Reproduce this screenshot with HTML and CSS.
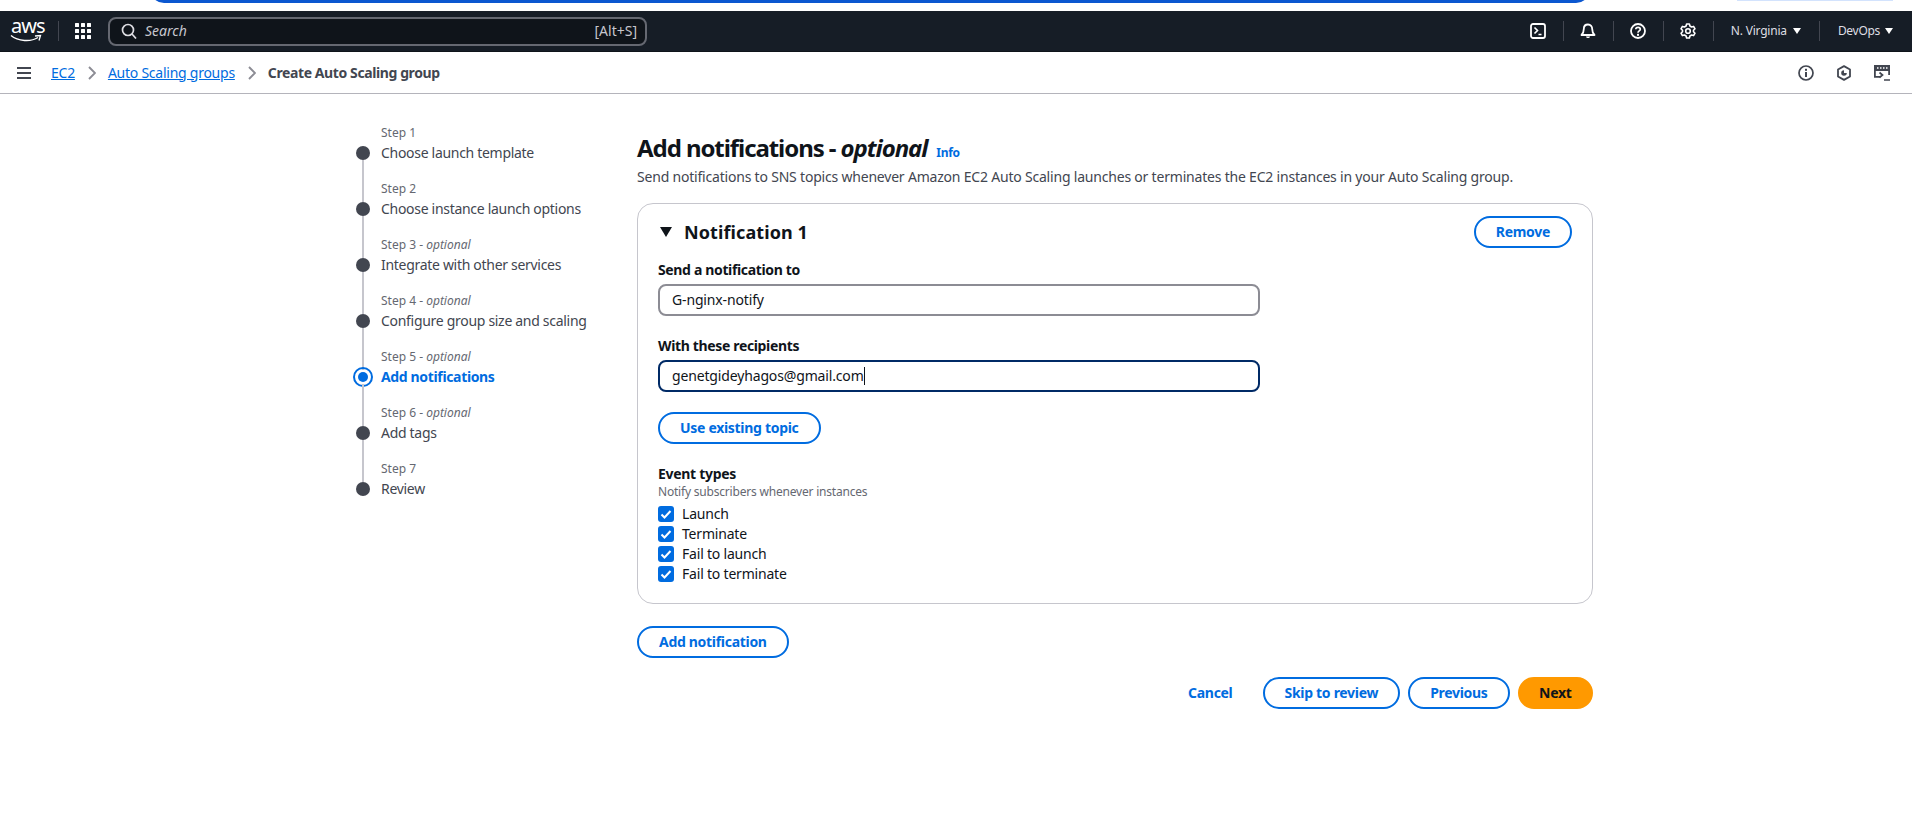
FILE: index.html
```html
<!DOCTYPE html>
<html lang="en">
<head>
    <meta charset="UTF-8">
    <title>Create Auto Scaling group</title>
    <link rel="stylesheet" href="styles.css">
</head>
<body>
    <div class="browser-strip">
        <div class="strip-box"></div>
        <div class="strip-tint"></div>
    </div>

    <header class="topnav">
        <div class="aws-logo">
            <span class="aws-word">aws</span>
            <svg class="aws-smile" viewBox="0 0 32 10" width="32" height="10"><path d="M1 1.500C8 7.500 21 8 28 3.500" fill="none" stroke="#fff" stroke-width="1.400"/><path d="M25 2 30.500 1.500 29 6.500" fill="none" stroke="#fff" stroke-width="1.300"/></svg>
        </div>
        <span class="nav-sep nav-sep-logo"></span>
        <svg class="grid-icon" viewBox="0 0 16 16" width="16" height="16"><g fill="#fff"><rect width="4" height="4" rx=".5"/><rect x="6" width="4" height="4" rx=".5"/><rect x="12" width="4" height="4" rx=".5"/><rect y="6" width="4" height="4" rx=".5"/><rect x="6" y="6" width="4" height="4" rx=".5"/><rect x="12" y="6" width="4" height="4" rx=".5"/><rect y="12" width="4" height="4" rx=".5"/><rect x="6" y="12" width="4" height="4" rx=".5"/><rect x="12" y="12" width="4" height="4" rx=".5"/></g></svg>
        <div class="search">
            <svg viewBox="0 0 16 16" width="16" height="16"><circle cx="7" cy="7" r="5.500" fill="none" stroke="#dedee3" stroke-width="1.700"/><path d="m11 11 4 4.500" stroke="#dedee3" stroke-width="1.700"/></svg>
            <span class="search-text">Search</span>
            <span class="search-key">[Alt+S]</span>
        </div>
        <div class="nav-right">
            <div class="nav-icon"><svg viewBox="0 0 16 16" width="16" height="16"><rect x="1" y="1" width="14" height="14" rx="2" fill="none" stroke="#fff" stroke-width="1.800"/><path d="m4.500 4.500 3 3-3 3M8.500 11.500h3" fill="none" stroke="#fff" stroke-width="1.600"/></svg></div>
            <span class="nav-sep"></span>
            <div class="nav-icon"><svg viewBox="0 0 16 16" width="16" height="16"><path d="M8 1.500c-2.700 0-4.200 2-4.200 4.500 0 3-.8 4.500-2.300 6h13c-1.500-1.500-2.300-3-2.300-6 0-2.500-1.500-4.500-4.200-4.500Z" fill="none" stroke="#fff" stroke-width="1.800" stroke-linejoin="round"/><path d="M6 13.500c.3 2 3.700 2 4 0Z" fill="#fff"/></svg></div>
            <span class="nav-sep"></span>
            <div class="nav-icon"><svg viewBox="0 0 16 16" width="16" height="16"><circle cx="8" cy="8" r="7" fill="none" stroke="#fff" stroke-width="1.800"/><path d="M5.800 6.200C5.800 3.600 10.300 3.700 10.300 6.200 10.300 7.900 8 7.800 8 9.700" fill="none" stroke="#fff" stroke-width="1.700"/><rect x="7" y="10.800" width="2" height="2" fill="#fff"/></svg></div>
            <span class="nav-sep"></span>
            <div class="nav-icon"><svg viewBox="0 0 16 16" width="16" height="16"><path d="M6.600 1h2.800l.5 2 1.700 1 2-.6 1.400 2.400L13.500 7.300v1.400l1.500 1.500-1.400 2.400-2-.6-1.700 1-.5 2H6.600l-.5-2-1.700-1-2 .6L1 10.200l1.500-1.500V7.300L1 5.800l1.400-2.400 2 .6 1.700-1Z" fill="none" stroke="#fff" stroke-width="1.600" stroke-linejoin="round"/><circle cx="8" cy="8" r="2.300" fill="none" stroke="#fff" stroke-width="1.600"/></svg></div>
            <span class="nav-sep"></span>
            <div class="nav-menu nav-region">N. Virginia <span class="caret-white"></span></div>
            <span class="nav-sep"></span>
            <div class="nav-menu nav-account">DevOps <span class="caret-white"></span></div>
        </div>
    </header>

    <div class="subnav">
        <svg class="burger" viewBox="0 0 14 12" width="14" height="12"><path d="M0 1h14M0 6h14M0 11h14" stroke="#424650" stroke-width="2"/></svg>
        <a class="crumb" href="#">EC2</a>
        <svg class="chevron" viewBox="0 0 8 14" width="8" height="14"><path d="m1 1 6 6-6 6" fill="none" stroke="#8c8c94" stroke-width="1.900"/></svg>
        <a class="crumb" href="#">Auto Scaling groups</a>
        <svg class="chevron" viewBox="0 0 8 14" width="8" height="14"><path d="m1 1 6 6-6 6" fill="none" stroke="#8c8c94" stroke-width="1.900"/></svg>
        <span class="crumb-current">Create Auto Scaling group</span>
        <div class="subnav-tools">
            <svg viewBox="0 0 16 16" width="16" height="16"><circle cx="8" cy="8" r="7" fill="none" stroke="#424650" stroke-width="1.700"/><path d="M8 7v5" stroke="#424650" stroke-width="2"/><rect x="7" y="3.800" width="2" height="2" fill="#424650"/></svg>
            <svg viewBox="0 0 16 16" width="16" height="16"><path d="M8 1.100 14 4.500v7L8 14.900 2 11.500v-7Z" fill="none" stroke="#424650" stroke-width="1.800" stroke-linejoin="round"/><path d="M8 5.200a2.800 2.800 0 1 0 2.800 2.800H8Z" fill="#424650"/></svg>
            <svg viewBox="0 0 16 16" width="16" height="16"><path d="M0 0h16v10h-1.800V6H1.800v5H6v1.800H0Z" fill="#424650"/><path d="M3 3h1.500M6 3h1.500M9 3h1.500M12 3h1.500" stroke="#fff" stroke-width="1.500"/><path d="m5.500 7.500 3 2.500-3 2.500M10 15h6" fill="none" stroke="#424650" stroke-width="1.700"/></svg>
        </div>
    </div>

    <main class="wizard">
        <ol class="steps">
            <li class="step step-first">
                <div class="marker"><span class="line"></span><span class="dot"></span></div>
                <div class="step-text"><small>Step 1</small><span>Choose launch template</span></div>
            </li>
            <li class="step">
                <div class="marker"><span class="line"></span><span class="dot"></span></div>
                <div class="step-text"><small>Step 2</small><span>Choose instance launch options</span></div>
            </li>
            <li class="step">
                <div class="marker"><span class="line"></span><span class="dot"></span></div>
                <div class="step-text"><small>Step 3 - <i>optional</i></small><span>Integrate with other services</span></div>
            </li>
            <li class="step">
                <div class="marker"><span class="line"></span><span class="dot"></span></div>
                <div class="step-text"><small>Step 4 - <i>optional</i></small><span>Configure group size and scaling</span></div>
            </li>
            <li class="step step-active">
                <div class="marker"><span class="line"></span><span class="dot"></span></div>
                <div class="step-text"><small>Step 5 - <i>optional</i></small><span>Add notifications</span></div>
            </li>
            <li class="step">
                <div class="marker"><span class="line"></span><span class="dot"></span></div>
                <div class="step-text"><small>Step 6 - <i>optional</i></small><span>Add tags</span></div>
            </li>
            <li class="step">
                <div class="marker"><span class="line"></span><span class="dot"></span></div>
                <div class="step-text"><small>Step 7</small><span>Review</span></div>
            </li>
        </ol>

        <section class="content">
            <div class="page-title">
                <h1>Add notifications - <i>optional</i></h1>
                <a class="info-link" href="#">Info</a>
            </div>
            <p class="page-desc">Send notifications to SNS topics whenever Amazon EC2 Auto Scaling launches or terminates the EC2 instances in your Auto Scaling group.</p>

            <div class="card">
                <div class="card-head">
                    <h2><span class="caret-dark"></span>Notification 1</h2>
                    <button class="btn">Remove</button>
                </div>

                <label class="field-label">Send a notification to</label>
                <div class="input">G-nginx-notify</div>

                <label class="field-label field-gap">With these recipients</label>
                <div class="input input-focus">genetgideyhagos@gmail.com<span class="text-caret"></span></div>

                <button class="btn btn-topic">Use existing topic</button>

                <div class="event-title">Event types</div>
                <div class="event-desc">Notify subscribers whenever instances</div>
                <div class="checks">
                    <div class="check"><svg viewBox="0 0 16 16" width="16" height="16"><rect width="16" height="16" rx="3" fill="#006ce0"/><path d="m3.500 8.500 3 3 6-6.500" fill="none" stroke="#fff" stroke-width="2"/></svg>Launch</div>
                    <div class="check"><svg viewBox="0 0 16 16" width="16" height="16"><rect width="16" height="16" rx="3" fill="#006ce0"/><path d="m3.500 8.500 3 3 6-6.500" fill="none" stroke="#fff" stroke-width="2"/></svg>Terminate</div>
                    <div class="check"><svg viewBox="0 0 16 16" width="16" height="16"><rect width="16" height="16" rx="3" fill="#006ce0"/><path d="m3.500 8.500 3 3 6-6.500" fill="none" stroke="#fff" stroke-width="2"/></svg>Fail to launch</div>
                    <div class="check"><svg viewBox="0 0 16 16" width="16" height="16"><rect width="16" height="16" rx="3" fill="#006ce0"/><path d="m3.500 8.500 3 3 6-6.500" fill="none" stroke="#fff" stroke-width="2"/></svg>Fail to terminate</div>
                </div>
            </div>

            <button class="btn btn-add">Add notification</button>

            <div class="actions">
                <button class="btn btn-link">Cancel</button>
                <button class="btn">Skip to review</button>
                <button class="btn">Previous</button>
                <button class="btn btn-primary">Next</button>
            </div>
        </section>
    </main>
</body>
</html>
```

FILE: styles.css
```css
* {
    box-sizing: border-box;
}

body {
    margin: 0;
    background: #fff;
    color: #0f141a;
    font-family: "Noto Sans", "Open Sans", Arial, sans-serif;
    font-size: 14px;
    line-height: 20px;
    letter-spacing: -.2px;
}

/* strip of the browser page above the console */
.browser-strip {
    display: flex;
    height: 11px;
    overflow: hidden;
}

.strip-box {
    width: 1440px;
    height: 30px;
    margin: -27px 0 0 150px;
    border: 3px solid #0b57d0;
    border-radius: 14px;
}

.strip-tint {
    width: 156px;
    height: 1px;
    margin-left: 147px;
    background: #d3e3fd;
}

/* top navigation */
.topnav {
    display: flex;
    align-items: center;
    height: 41px;
    padding-left: 10px;
    background: #161d26;
    border-bottom: 1px solid #0f141a;
}

.aws-logo {
    position: relative;
    width: 32px;
    height: 28px;
    color: #fff;
}

.aws-word {
    display: block;
    padding-left: 1px;
    font-size: 20px;
    line-height: 18px;
    letter-spacing: -1px;
}

.aws-smile {
    position: absolute;
    left: 0;
    top: 17px;
}

.nav-sep {
    width: 1px;
    height: 20px;
    background: #424650;
}

.nav-sep-logo {
    margin: 0 16px;
}

.search {
    display: flex;
    align-items: center;
    width: 539px;
    height: 29px;
    margin-left: 17px;
    padding: 0 8px 0 11px;
    background: #0f141a;
    border: 2px solid #656871;
    border-radius: 8px;
    color: #c6c6cd;
    letter-spacing: 0;
}

.search-text {
    margin-left: 8px;
    font-style: italic;
}

.search-key {
    margin-left: auto;
}

.nav-right {
    display: flex;
    align-items: center;
    margin-left: auto;
    padding-right: 19px;
}

.nav-icon {
    display: flex;
    justify-content: center;
    width: 49px;
}

.nav-menu {
    display: flex;
    align-items: center;
    gap: 6px;
    color: #dedee3;
    font-size: 12px;
}

.nav-region {
    padding: 0 18px 0 17px;
}

.nav-account {
    gap: 5px;
    padding-left: 18px;
    letter-spacing: -.3px;
}

.caret-white {
    width: 0;
    height: 0;
    border-left: 4px solid transparent;
    border-right: 4px solid transparent;
    border-top: 6px solid #fff;
}

/* breadcrumb bar */
.subnav {
    display: flex;
    align-items: center;
    height: 42px;
    padding: 0 22px 0 17px;
    border-bottom: 1px solid #b4b4bb;
}

.burger {
    margin-right: 20px;
}

.crumb {
    color: #006ce0;
    text-decoration: underline;
    letter-spacing: -.25px;
}

.chevron {
    margin: 0 12px 0 13px;
}

.crumb-current {
    color: #424650;
    font-weight: 700;
    letter-spacing: -.4px;
}

.subnav-tools {
    display: flex;
    gap: 22px;
    margin-left: auto;
}

/* wizard layout */
.wizard {
    display: flex;
    padding-left: 353px;
}

.steps {
    width: 284px;
    margin: 0;
    padding: 10px 0 0;
    list-style: none;
}

.step {
    display: flex;
    gap: 8px;
    height: 56px;
}

.marker {
    display: flex;
    flex-direction: column;
    align-items: center;
    width: 20px;
}

.line {
    flex: 1;
    width: 2px;
    background: #c6c6cd;
}

.step-first .line {
    visibility: hidden;
}

.dot {
    flex: none;
    width: 14px;
    height: 14px;
    border-radius: 50%;
    background: #424650;
}

.step-text {
    display: flex;
    flex-direction: column;
    justify-content: flex-end;
    margin-bottom: -3px;
    color: #424650;
    letter-spacing: -.3px;
}

.step-text small {
    color: #656871;
    font-size: 12px;
    line-height: 20px;
    letter-spacing: 0;
}

.step-active .dot {
    width: 20px;
    height: 20px;
    margin: -3px;
    padding: 3px;
    border: 2px solid #006ce0;
    background: #006ce0;
    background-clip: content-box;
}

.step-active .step-text span {
    color: #006ce0;
    font-weight: 700;
    letter-spacing: -.35px;
}

/* main column */
.content {
    width: 956px;
    padding-top: 39px;
}

.page-title {
    display: flex;
    align-items: baseline;
    gap: 9px;
}

h1 {
    margin: 0;
    font-size: 24px;
    line-height: 30px;
    font-weight: 700;
    letter-spacing: -1.07px;
}

.info-link {
    color: #006ce0;
    font-size: 12px;
    font-weight: 700;
    text-decoration: none;
    letter-spacing: -.3px;
}

.page-desc {
    margin: 4px 0 16px;
    color: #424650;
}

.card {
    display: flex;
    flex-direction: column;
    align-items: flex-start;
    height: 401px;
    padding: 12px 20px 0;
    border: 1px solid #c6c6cd;
    border-radius: 16px;
}

.card-head {
    display: flex;
    justify-content: space-between;
    align-items: center;
    align-self: stretch;
    margin-bottom: 12px;
}

h2 {
    display: flex;
    align-items: center;
    margin: 0;
    font-size: 18px;
    line-height: 22px;
    font-weight: 700;
    letter-spacing: .1px;
}

.caret-dark {
    width: 0;
    height: 0;
    margin: 0 12px 0 2px;
    border-left: 6.500px solid transparent;
    border-right: 6.500px solid transparent;
    border-top: 10px solid #0f141a;
}

.field-label {
    margin-bottom: 4px;
    font-weight: 700;
    letter-spacing: -.35px;
}

.field-gap {
    margin-top: 20px;
}

.input {
    display: flex;
    align-items: center;
    width: 602px;
    height: 32px;
    padding: 0 12px;
    border: 2px solid #8c8c94;
    border-radius: 8px;
    letter-spacing: -.15px;
}

.input-focus {
    border-color: #002a66;
}

.text-caret {
    width: 1px;
    height: 18px;
    background: #0f141a;
}

.btn {
    height: 32px;
    padding: 0 20px;
    background: #fff;
    border: 2px solid #006ce0;
    border-radius: 20px;
    color: #006ce0;
    font: 700 14px/20px "Noto Sans", "Open Sans", Arial, sans-serif;
    letter-spacing: -.3px;
}

.btn-topic {
    margin-top: 20px;
}

.event-title {
    margin-top: 20px;
    font-weight: 700;
    letter-spacing: -.3px;
}

.event-desc {
    color: #656871;
    font-size: 12px;
    line-height: 16px;
}

.checks {
    margin-top: 4px;
}

.check {
    display: flex;
    align-items: center;
    gap: 8px;
    height: 20px;
}

.btn-add {
    margin-top: 22px;
}

.actions {
    display: flex;
    justify-content: flex-end;
    gap: 8px;
    margin-top: 19px;
}

.btn-link {
    border-color: transparent;
}

.btn-primary {
    padding: 0 19.500px;
    background: #ff9900;
    border-color: #ff9900;
    color: #0f141a;
}
```
